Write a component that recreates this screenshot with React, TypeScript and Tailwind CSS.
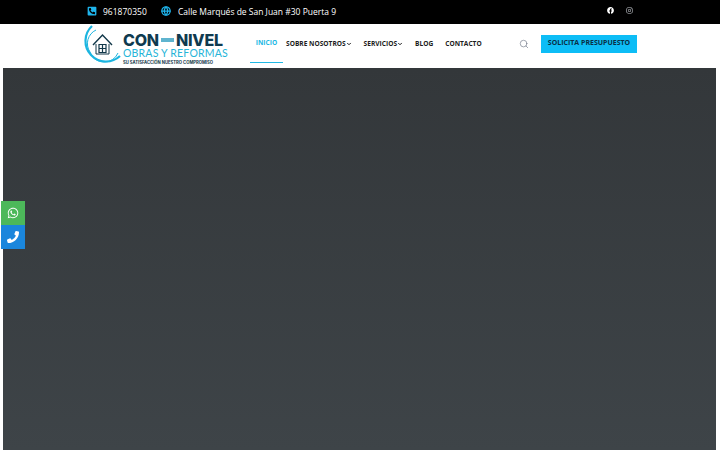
// App.tsx
// Con-Nivel landing: black contact strip, white nav, dark hero with floating contact buttons.

import React from "react";
import { ChevronDown, Globe, Search } from "lucide-react";
import { FaFacebook, FaInstagram, FaPhoneAlt, FaPhoneSquareAlt, FaWhatsapp } from "react-icons/fa";

const NAV_ITEMS = [
  { label: "SOBRE NOSOTROS", caret: true },
  { label: "SERVICIOS", caret: true },
  { label: "BLOG", caret: false },
  { label: "CONTACTO", caret: false },
];

const Logo: React.FC = () => (
  <div className="flex items-start w-[136px] h-[44px]">
    <svg width="42" height="44" viewBox="0 0 42 44" className="shrink-0 -ml-px" aria-hidden="true">
      <path d="M11 2 A19 19 0 1 0 39 32" fill="none" stroke="#1cb5e0" strokeWidth="2.2" />
      <path d="M15 6 A15 15 0 0 0 9 28 A15 15 0 0 0 37 29" fill="none" stroke="#1cb5e0" strokeWidth="1" />
      <path d="M12 21 L21.5 11 L31 21" fill="none" stroke="#12384a" strokeWidth="1.4" />
      <path d="M15 20 V30 H28 V20" fill="none" stroke="#12384a" strokeWidth="1" />
      <path d="M18 20.5 H25 V28.5 H18 Z M21.5 20.5 V28.5 M18 24.5 H25" fill="none" stroke="#12384a" strokeWidth="1.2" />
    </svg>
    <div className="flex flex-col pt-[8px] font-['Inter',sans-serif] leading-none">
      <div className="flex items-center h-[15px] text-[#0f3a4f] text-[16px] font-extrabold tracking-[-0.2px]">
        <span>CON</span>
        <span className="w-[13px] h-[4px] mx-[2px] bg-[#5fb4cf]" />
        <span>NIVEL</span>
      </div>
      <div className="mt-[1px] h-[11px] text-[10.5px] leading-[11px] text-[#25b4d8] font-['Lato',sans-serif] tracking-[0.2px] whitespace-nowrap">
        OBRAS Y REFORMAS
      </div>
      <div className="mt-[1px] text-[4.2px] leading-[5px] font-bold text-[#12384a] whitespace-nowrap">
        SU SATISFACCIÓN NUESTRO COMPROMISO
      </div>
    </div>
  </div>
);

const TopBar: React.FC = () => (
  <div className="h-6 bg-black flex items-center pl-[87px] text-white text-[8.5px] font-['Open_Sans',sans-serif]">
    <FaPhoneSquareAlt className="w-[10px] h-[10px] text-[#1fb4ec] -mt-[2px]" />
    <span className="ml-[6px] w-[58px]">961870350</span>
    <Globe className="w-[10px] h-[10px] text-[#1fb4ec] -mt-[2px]" strokeWidth={3} />
    <span className="ml-[7px]">Calle Marqués de San Juan #30 Puerta 9</span>
    <div className="ml-auto mr-[87px] -mt-[3px] flex items-center gap-[12px]">
      <FaFacebook className="w-[7px] h-[7px]" />
      <FaInstagram className="w-[7px] h-[7px] text-gray-300" />
    </div>
  </div>
);

const NavBar: React.FC = () => (
  <header className="h-[44px] bg-white flex pl-[82px] font-['Open_Sans',sans-serif]">
    <Logo />
    <nav className="ml-[32px] flex items-stretch text-[6.6px] font-bold text-[#1c1c1c] whitespace-nowrap">
      <a className="w-[33px] mr-[3px] flex items-center justify-center text-[#21b8e4] border-b border-[#21b8e4] h-[39px]">
        INICIO
      </a>
      <div className="flex items-start pt-[15px] gap-[12px] h-[39px]">
        {NAV_ITEMS.map((item) => (
          <a key={item.label} className="flex items-center h-[9px]">
            {item.label}
            {item.caret && <ChevronDown className="w-[6px] h-[6px]" strokeWidth={4} />}
          </a>
        ))}
      </div>
    </nav>
    <div className="ml-auto mr-[83px] flex items-center h-[39px]">
      <Search className="w-[10px] h-[10px] mr-[12px] text-gray-500" strokeWidth={1.5} />
      <a className="w-[96px] h-[18px] bg-[#0dbdf6] flex items-center justify-center text-[7px] font-bold text-[#0a2f45]">
        SOLICITA PRESUPUESTO
      </a>
    </div>
  </header>
);

const App: React.FC = () => (
  <div className="relative h-[450px] w-[720px] overflow-hidden bg-white">
    <TopBar />
    <NavBar />
    <main className="mx-[3px] mr-[4px] h-[382px] bg-gradient-to-b from-[#33373a] to-[#3e4448]" />

    {/* floating contact buttons */}
    <div className="absolute left-[1px] top-[201px] flex flex-col">
      <a className="w-6 h-6 bg-[#4cb85a] flex items-center justify-center">
        <FaWhatsapp className="w-[12px] h-[12px] text-white" />
      </a>
      <a className="w-6 h-6 bg-[#1a86dc] flex items-center justify-center">
        <FaPhoneAlt className="w-[12px] h-[12px] text-white scale-x-[-1]" />
      </a>
    </div>
  </div>
);

export default App;
